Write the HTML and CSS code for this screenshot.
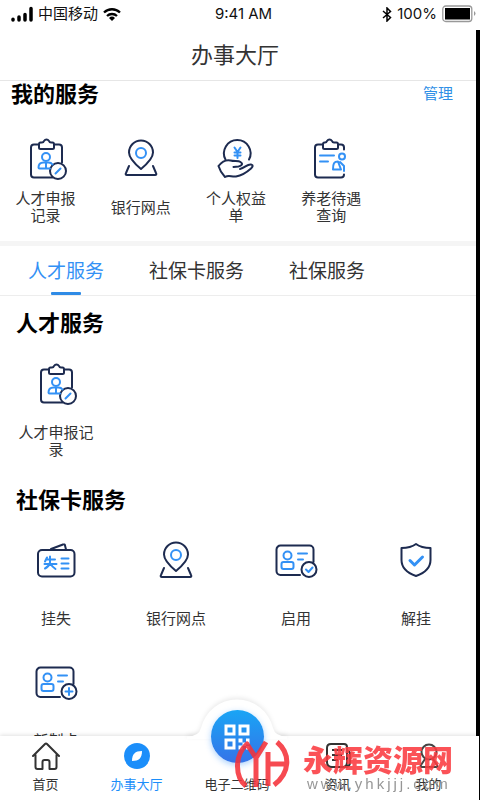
FILE: index.html
```html
<!DOCTYPE html>
<html lang="zh-CN">
<head>
<meta charset="utf-8">
<meta name="viewport" content="width=device-width, initial-scale=1">
<title>办事大厅</title>
<link rel="stylesheet" href="styles.css">
</head>
<body>
<svg class="sprite" aria-hidden="true">
  <symbol id="i-record" viewBox="0 0 48 48">
    <g class="ink"><path d="M17 8.500h-5a3 3 0 0 0-3 3v27a3 3 0 0 0 3 3h19M32 8.500h5a3 3 0 0 1 3 3v15"/><path d="M20 6.500q1.500 0 2-1.500 1-1.500 2.500-1.500t2.500 1.500q.5 1.500 2 1.500h1.500q1.500 0 1.500 2v3q0 1.500-1.500 1.500h-12q-1.500 0-1.500-1.500v-3q0-2 1.500-2z"/><circle cx="36" cy="35" r="8"/></g>
    <g class="hue"><circle cx="24" cy="21" r="4"/><path d="M28 32.500H17.500q-1 0-1-1c0-3 2-5 5-5h5c2 0 3 .5 4 2M24 27v5M33.500 37.500l5-5"/></g>
  </symbol>
  <symbol id="i-pin" viewBox="0 0 48 48">
    <g class="ink"><path d="M24 33C18 28 12 22 12 16.500a12 12 0 0 1 24 0C36 22 30 28 24 33z"/><path d="M12 30l-3 7q-1 2 1 2h28q2 0 1-2l-3-7"/></g>
    <circle class="hue" cx="24" cy="17" r="5"/>
  </symbol>
  <symbol id="i-hand" viewBox="0 0 48 48">
    <g class="ink"><path d="M13.500 23.500a13.300 13.300 0 1 1 23.500 0"/><path d="M6.500 30c4-5 8-6.500 12-5.500 4 1 8 0 10 1.500 3 2 1 4-2 4.500l-5 .5M28 33c5-1 7-5 11-4.500 2.500.5 2 2 0 4-5 4.500-9 7-15 8-5 .500-7-2-11 .5-3-3-5-6-6.500-11"/></g>
    <path class="hue" d="M22.500 11.500l3 4.500 3-4.500M25.500 16v6M22.500 16.500h6M22.500 19.500h6"/>
  </symbol>
  <symbol id="i-query" viewBox="0 0 48 48">
    <g class="ink"><path d="M16 8.500h-5a3 3 0 0 0-3 3v27a3 3 0 0 0 3 3h23q3 0 3-3M31 8.500h3a3 3 0 0 1 3 3v2"/><path d="M18 6.500q1.500 0 2-1.500 1-1.500 2.500-1.500t2.500 1.500q.5 1.500 2 1.500h2.500q1.500 0 1.500 2v3q0 1.500-1.500 1.500h-12q-1.500 0-1.500-1.500v-3q0-2 1.500-2z"/></g>
    <g class="hue"><path d="M13 19.500h14M13 25.500h8M26 33.500c0-6 1-8 5-8l3 8zM33 26l4 4v5"/><circle cx="35" cy="20.500" r="3"/></g>
  </symbol>
  <symbol id="i-lost" viewBox="0 0 48 48">
    <g class="ink"><rect x="6" y="12" width="36.500" height="26.500" rx="4"/><path d="M19 11l12-4.500q2-.5 2 1l1 4"/></g>
    <path class="hue" d="M15 19.500l-2 4M14 21.500h9M12.500 26h12M18 18.500v6q-1 4-5 6M18.500 26q2 3 5 5M29.500 20.500h7M29.500 25.500h7M29.500 30.500h7"/>
  </symbol>
  <symbol id="i-card" viewBox="0 0 48 48">
    <path class="ink" d="M28 37H8.500a4 4 0 0 1-4-4V11.500a4 4 0 0 1 4-4h29a4 4 0 0 1 4 4V24"/>
    <circle class="ink" cx="37" cy="31.500" r="7.500"/>
    <g class="hue"><circle cx="15.500" cy="17.500" r="4"/><rect x="9.500" y="24" width="12" height="7" rx="2"/><path d="M26 15.500h9M26 21.500h5"/></g>
  </symbol>
  <symbol id="i-shield" viewBox="0 0 48 48">
    <path class="ink" d="M24 6c4 3 9 4 14.500 4v12c0 8-6 13-14.500 16C15.500 35 9.500 30 9.500 22V10C15 10 20 9 24 6z"/>
    <path class="hue thick" d="M18 22.500l4.500 4.500 8-8"/>
  </symbol>
</svg>

<div class="app">
  <header class="status">
    <div class="status-left">
      <svg width="22" height="16" viewBox="0 0 22 16" aria-hidden="true"><g stroke="#000" stroke-width="3.500" stroke-linecap="round"><path d="M2 13.200v.8M8 11v3M14 8.500v5.500M20 2.500v11.500"/></g></svg>
      <span>中国移动</span>
      <svg width="18" height="13" viewBox="0 0 18 13" aria-hidden="true"><g fill="none" stroke="#000" stroke-width="2.300"><path d="M1 4.500a11.500 11.500 0 0 1 16 0M4 8a7.300 7.300 0 0 1 10 0"/></g><path d="M9 13L6 10a4.300 4.300 0 0 1 6 0z"/></svg>
    </div>
    <time>9:41 AM</time>
    <div class="status-right">
      <svg width="10" height="15" viewBox="0 0 10 15" aria-hidden="true"><path d="M1 4l7.500 6.500L5 14V1l3.500 3.500L1 11" fill="none" stroke="#000" stroke-width="1.500"/></svg>
      <span>100%</span>
      <svg width="34" height="18" viewBox="0 0 34 18" aria-hidden="true"><rect x=".8" y="1" width="29" height="15.500" rx="3" fill="#fff" stroke="#999" stroke-width="1.300"/><rect x="3" y="3" width="25" height="11.500"/><path d="M32 6q3 2.500 0 5z" fill="#999"/></svg>
    </div>
  </header>

  <div class="screen">
    <div class="titlebar"><h1>办事大厅</h1></div>

    <main class="content">
      <section class="mine">
        <div class="mine-head">
          <h2>我的服务</h2>
          <a href="#manage">管理</a>
        </div>
        <div class="grid five">
          <a class="tile" href="#record"><svg class="icon"><use href="#i-record"/></svg><span>人才申报记录</span></a>
          <a class="tile" href="#bank"><svg class="icon"><use href="#i-pin"/></svg><span>银行网点</span></a>
          <a class="tile" href="#rights"><svg class="icon"><use href="#i-hand"/></svg><span>个人权益单</span></a>
          <a class="tile" href="#pension"><svg class="icon"><use href="#i-query"/></svg><span>养老待遇查询</span></a>
        </div>
      </section>

      <nav class="tabs" aria-label="服务分类">
        <a class="tab active" href="#talent">人才服务</a>
        <a class="tab" href="#card">社保卡服务</a>
        <a class="tab" href="#social">社保服务</a>
      </nav>

      <section class="group" id="talent">
        <h2>人才服务</h2>
        <div class="grid four">
          <a class="tile" href="#record"><svg class="icon"><use href="#i-record"/></svg><span>人才申报记录</span></a>
        </div>
      </section>

      <section class="group" id="card">
        <h2>社保卡服务</h2>
        <div class="grid four">
          <a class="tile" href="#lost"><svg class="icon"><use href="#i-lost"/></svg><span>挂失</span></a>
          <a class="tile" href="#bank"><svg class="icon"><use href="#i-pin"/></svg><span>银行网点</span></a>
          <a class="tile" href="#enable"><svg class="icon" viewBox="0 0 48 48"><use href="#i-card"/><path class="hue" d="M34 31.500l2.500 2.500 4-4.500"/></svg><span>启用</span></a>
          <a class="tile" href="#unlock"><svg class="icon"><use href="#i-shield"/></svg><span>解挂</span></a>
          <a class="tile" href="#new"><svg class="icon" viewBox="0 0 48 48"><use href="#i-card"/><path class="hue" d="M37 28v7M33.500 31.500h7"/></svg><span>新制卡</span></a>
        </div>
      </section>
    </main>
  </div>

  <nav class="bottom" aria-label="主导航">
    <svg class="bump" width="100" height="40" viewBox="0 0 100 40" aria-hidden="true"><path d="M0 37.500Q12 37.500 14 29A37 37 0 0 1 86 29Q88 37.500 100 37.500V40H0z" fill="#fff"/></svg>
    <a class="item" href="#home">
      <svg width="30" height="30" viewBox="0 0 30 30" aria-hidden="true"><path d="M2 15L14 3q1-1 2 0l12 12M4.500 14v12q0 2 2 2h5v-7q0-2 2-2h3q2 0 2 2v7h5q2 0 2-2V14" fill="none" stroke="#333" stroke-width="2" stroke-linecap="round" stroke-linejoin="round"/></svg>
      <span>首页</span>
    </a>
    <a class="item current" href="#hall">
      <svg width="30" height="30" viewBox="0 0 30 30" aria-hidden="true"><circle cx="15" cy="15" r="13" fill="#1b8efa"/><path d="M20 10c0 7-3 10-10 10 0-7 3-10 10-10z" fill="#fff"/></svg>
      <span>办事大厅</span>
    </a>
    <a class="item" href="#code">
      <span class="orb"><svg width="26" height="26" viewBox="0 0 26 26" aria-hidden="true"><g fill="none" stroke="#fff" stroke-width="3"><path d="M2 2h8v8H2zM16 2h8v8h-8zM2 16h8v8H2z"/></g><path d="M14.500 14.500h4v4h-4zM22 14.500h3.500v6H22zM18.500 18.500H22V22h-3.500zM14.500 21.500h4v4h-4zM22 22h3.500v3.500H22z" fill="#fff"/></svg></span>
      <span>电子二维码</span>
    </a>
    <a class="item" href="#news">
      <svg width="30" height="30" viewBox="0 0 30 30" aria-hidden="true"><path d="M8 3h13q3 0 3 3v15q0 5-4 5H9q-5 0-5-5V7q0-4 4-4zM9 9h10M9 14h10M9 19h6M24 10q3 0 3 3v8q0 5-5 5" fill="none" stroke="#333" stroke-width="2"/></svg>
      <span>资讯</span>
    </a>
    <a class="item" href="#me">
      <svg width="30" height="30" viewBox="0 0 30 30" aria-hidden="true"><g fill="none" stroke="#444" stroke-width="2"><circle cx="15" cy="11" r="7.500"/><path d="M11 18l-4 6q-1 2 1 2h14q2 0 1-2l-4-6"/></g></svg>
      <span>我的</span>
    </a>
    <div class="mark">
      <svg width="58" height="50" viewBox="0 0 58 50" aria-hidden="true"><path d="M11 47C0 38-1 17 12 5l9 14v29M31 3L21 19M33 13v34M33 25h18M42 3c14 12 13 31-3 43" fill="none" stroke="#f5323a" stroke-width="5" stroke-linejoin="round"/></svg>
      <div class="mark-text"><strong>永辉资源网</strong><span>www.yhkjjj.com</span></div>
    </div>
  </nav>
</div>
</body>
</html>
```
FILE: styles.css
```css
* { box-sizing: border-box; }

body {
  margin: 0;
  background: #fff;
  color: #333;
  font-family: "Noto Sans CJK SC", "Liberation Sans", sans-serif;
}

h1, h2 { margin: 0; }
a { color: inherit; text-decoration: none; }
.sprite { position: absolute; width: 0; height: 0; }

.ink, .hue {
  fill: none;
  stroke: #1d2b50;
  stroke-width: 2;
  stroke-linecap: round;
  stroke-linejoin: round;
}
.ink circle, circle.ink { fill: #fff; }
.hue { stroke: #3391f5; }
.thick { stroke-width: 3; }

.app {
  display: flex;
  flex-direction: column;
  height: 100vh;
  overflow: hidden;
}

.status {
  display: grid;
  grid-template-columns: 1fr auto 1fr;
  align-items: center;
  flex: none;
  height: 30px;
  padding: 0 4px 2px 11px;
  color: #111;
  font-family: Inter, "Noto Sans CJK SC", sans-serif;
  font-size: 15px;
  line-height: 24px;
}
.status-left, .status-right {
  display: flex;
  align-items: center;
  gap: 5px;
}
.status-right { justify-content: flex-end; }

.screen {
  display: flex;
  flex: 1;
  flex-direction: column;
  min-height: 0;
  border-right: 4px solid #000;
}

.titlebar {
  flex: none;
  padding: 7px 6px 11px 0;
  border-bottom: 1px solid #e6e6e6;
  text-align: center;
}
.titlebar h1 {
  font-size: 22px;
  font-weight: 400;
  line-height: 32px;
}

.content {
  flex: 1;
  min-height: 0;
  overflow: hidden;
}

h2 {
  color: #000;
  font-size: 22px;
  font-weight: 700;
  line-height: 30px;
}

.mine {
  padding-bottom: 17px;
  border-bottom: 5px solid #f5f5f5;
}
.mine-head {
  display: flex;
  align-items: center;
  justify-content: space-between;
  margin-bottom: 32px;
  padding: 0 23px 0 11px;
}
.mine-head h2 { line-height: 23px; }
.mine-head a {
  color: #2f8fe6;
  font-size: 15px;
  line-height: 23px;
}

.grid { display: grid; }
.five {
  grid-template-columns: repeat(5, 1fr);
  margin: 0 2px 0 -2px;
}
.four {
  grid-template-columns: repeat(4, 1fr);
  row-gap: 25px;
  margin-left: -4px;
}

.tile {
  display: flex;
  flex-direction: column;
  align-items: center;
  gap: 5px;
  padding-bottom: 1px;
}
.four .tile { gap: 14px; }
.tile span {
  display: flex;
  align-items: center;
  justify-content: center;
  width: 66px;
  height: 34px;
  font-size: 15px;
  line-height: 17px;
  text-align: center;
}
.four .tile span { width: 80px; }
.icon {
  width: 48px;
  height: 48px;
}

.tabs {
  display: flex;
  gap: 45px;
  height: 50px;
  padding-left: 28px;
  border-bottom: 1px solid #ededed;
}
.tab {
  position: relative;
  font-size: 19px;
  line-height: 48px;
}
.tab.active { color: #3391f5; }
.tab.active::after {
  content: "";
  position: absolute;
  bottom: 0;
  left: 50%;
  width: 30px;
  height: 3px;
  margin-left: -15px;
  border-radius: 1px;
  background: #2f8be6;
}

.group { padding: 10px 0 15px; }
.group h2 {
  margin-bottom: 25px;
  padding-left: 16px;
}

.bottom {
  position: relative;
  display: grid;
  grid-template-rows: 100%;
  grid-template-columns: 1fr 1fr 110px 1fr 1fr;
  flex: none;
  height: 64px;
  padding-right: 5px;
  border-right: 1px solid #000;
  background: #fff;
  box-shadow: 0 -1px 4px rgba(0, 0, 0, 0.12);
  font-size: 13px;
  line-height: 18px;
}
.bump {
  position: absolute;
  top: -37px;
  left: calc(50% - 53px);
  filter: drop-shadow(0 -2px 2px rgba(0, 0, 0, 0.08));
}
.item {
  position: relative;
  display: flex;
  flex-direction: column;
  align-items: center;
  justify-content: flex-end;
  gap: 4px;
  padding-bottom: 7px;
}
.item svg { flex: none; }
.current { color: #1b8efa; }
.orb {
  display: flex;
  flex: none;
  align-items: center;
  justify-content: center;
  width: 53px;
  height: 53px;
  margin-bottom: 8px;
  border-radius: 50%;
  background: linear-gradient(#19a5f5, #3573e8);
  box-shadow: 0 2px 6px rgba(40, 140, 250, 0.4);
}

.mark {
  position: absolute;
  top: 3px;
  right: 26px;
  display: flex;
  gap: 10px;
  opacity: 0.88;
  pointer-events: none;
}
.mark-text {
  display: flex;
  flex-direction: column;
}
.mark-text strong {
  color: #fb3b40;
  font-size: 30px;
  font-weight: 900;
  line-height: 38px;
}
.mark-text span {
  padding-left: 4px;
  color: #888;
  font-family: "Liberation Sans", sans-serif;
  font-size: 15px;
  letter-spacing: 3px;
  line-height: 14px;
}
```
